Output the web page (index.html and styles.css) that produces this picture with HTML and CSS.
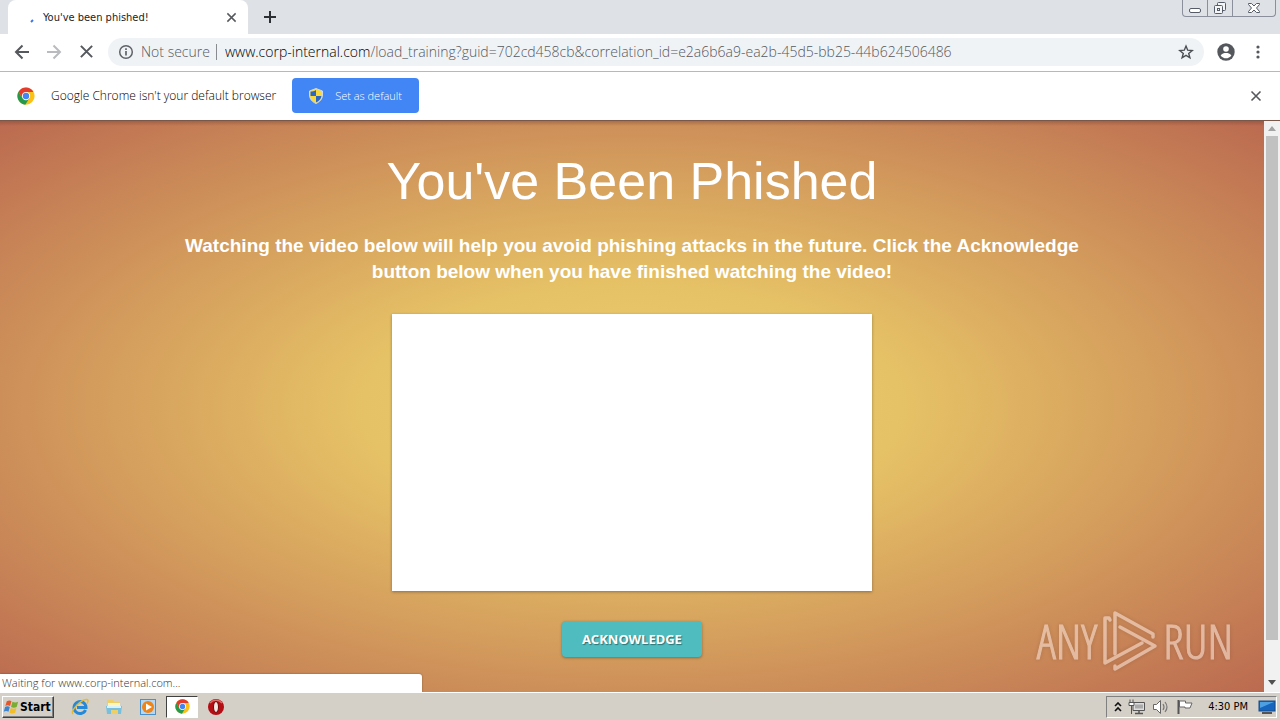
FILE: index.html
```html
<!DOCTYPE html>
<html lang="en">
<head>
<meta charset="utf-8">
<title>You've been phished!</title>
<link rel="stylesheet" href="styles.css">
</head>
<body>
<svg width="0" height="0" class="defs" aria-hidden="true">
  <symbol id="chrome" viewBox="0 0 48 48">
    <circle cx="24" cy="24" r="23" fill="#fbc116"/>
    <path d="M4.100 12.500A23 23 0 0 0 22 47L33.500 29.500 24 35 14.500 29.500z" fill="#269a4a"/>
    <path d="M4.100 12.500 14.500 29.500 24 13h20A23 23 0 0 0 4.100 12.500z" fill="#e33b2e"/>
    <circle cx="24" cy="24" r="11" fill="#fff"/>
    <circle cx="24" cy="24" r="8.500" fill="#4285f4"/>
  </symbol>
  <symbol id="cross" viewBox="0 0 12 12"><path d="m1.500 1.500 9 9m0-9-9 9" fill="none" stroke="currentColor" stroke-width="1.600"/></symbol>
</svg>

<div class="screen">
  <header class="tabstrip">
    <div class="tab">
      <svg class="spinner" width="16" height="16" viewBox="0 0 16 16"><path d="m7 9 2-2" stroke="#3c78e8" stroke-width="2"/></svg>
      <span class="tab-title">You've been phished!</span>
      <button class="icon-btn" aria-label="Close tab"><svg width="11" height="11"><use href="#cross"/></svg></button>
    </div>
    <button class="icon-btn new-tab" aria-label="New tab"><svg width="14" height="14" viewBox="0 0 14 14"><path d="M7 1v12M1 7h12" stroke="#2c2f33" stroke-width="2"/></svg></button>
    <div class="window-controls">
      <button aria-label="Minimize"><svg width="14" height="14" viewBox="0 0 14 14"><rect x="1.500" y="7.500" width="11" height="4" rx="1.500" fill="#fff" stroke="#555c68"/></svg></button>
      <button aria-label="Restore"><svg width="14" height="14" viewBox="0 0 14 14"><g fill="#f4f5f7" stroke="#555c68"><rect x="4.500" y="1.500" width="8" height="8" rx="1"/><rect x="1.500" y="4.500" width="8" height="8" rx="1"/><rect x="4.500" y="7.500" width="2" height="2"/></g></svg></button>
      <button class="wide" aria-label="Close window"><svg width="14" height="12" viewBox="0 0 14 12"><path d="M1.500 1.500h3L7 4l2.500-2.500h3v1L9.500 6l3 3.500v1h-3L7 8l-2.500 2.500h-3v-1l3-3.500-3-3.500z" fill="#fff" stroke="#555c68"/></svg></button>
    </div>
  </header>

  <nav class="toolbar">
    <button class="icon-btn" aria-label="Back"><svg width="16" height="16" viewBox="0 0 16 16"><path d="M15 8H2m6.500-6.500L2 8l6.500 6.500" fill="none" stroke="#55585c" stroke-width="2"/></svg></button>
    <button class="icon-btn" aria-label="Forward"><svg width="16" height="16" viewBox="0 0 16 16"><path d="M1 8h13M7.500 1.500 14 8l-6.500 6.500" fill="none" stroke="#b9bbbe" stroke-width="2"/></svg></button>
    <button class="icon-btn" aria-label="Stop"><svg width="15" height="15"><use href="#cross"/></svg></button>
    <div class="omnibox">
      <svg width="16" height="16" viewBox="0 0 16 16"><circle cx="8" cy="8" r="6.300" fill="none" stroke="#5f6368" stroke-width="1.500"/><path d="M8 7v4.500M8 4.300V6" stroke="#5f6368" stroke-width="1.700"/></svg>
      <span class="security">Not secure</span>
      <div class="url" role="textbox" aria-label="Address" contenteditable="true" spellcheck="false"><span class="host">www.corp-internal.com</span>/load_training?guid=702cd458cb&amp;correlation_id=e2a6b6a9-ea2b-45d5-bb25-44b624506486</div>
      <button class="icon-btn" aria-label="Bookmark"><svg width="16" height="16" viewBox="0 0 16 16"><path d="m8 2 1.700 4.200 4.500.3-3.500 2.900 1.200 4.400L8 11.300l-3.900 2.500 1.200-4.400-3.500-2.900 4.500-.3z" fill="none" stroke="#4b4f54" stroke-width="1.400"/></svg></button>
    </div>
    <button class="icon-btn" aria-label="Profile"><svg width="18" height="18" viewBox="0 0 18 18"><circle cx="9" cy="9" r="8.700" fill="#54585d"/><circle cx="9" cy="6" r="2.800" fill="#fff"/><path d="M3.600 12.500C5 10.200 7 9.900 9 9.900s4 .3 5.400 2.600C13 14.400 11 15.300 9 15.300s-4-.9-5.400-2.800z" fill="#fff"/></svg></button>
    <button class="icon-btn" aria-label="Menu"><svg width="16" height="16" viewBox="0 0 16 16" fill="#54585d"><circle cx="8" cy="3" r="1.600"/><circle cx="8" cy="8" r="1.600"/><circle cx="8" cy="13" r="1.600"/></svg></button>
  </nav>

  <aside class="infobar">
    <svg width="18" height="18"><use href="#chrome"/></svg>
    <span class="infobar-text">Google Chrome isn't your default browser</span>
    <button class="default-btn">
      <svg width="14" height="16" viewBox="0 0 14 16"><path d="M7 .5 13.500 3v4c0 4-3 7-6.500 8.500C3.500 14 .5 11 .5 7V3z" fill="#f8d93e"/><path d="M7 2v6H1.500V3.500C3.500 3.500 5.500 3 7 2zM7 8h5.500c-.5 3.500-3 5.200-5.500 6.500z" fill="#2c67c4"/><path d="M7 .5 13.500 3v4c0 4-3 7-6.500 8.500C3.500 14 .5 11 .5 7V3z" fill="none" stroke="#cfd8e4"/></svg>
      Set as default
    </button>
    <button class="icon-btn infobar-close" aria-label="Dismiss"><svg width="12" height="12"><use href="#cross"/></svg></button>
  </aside>

  <div class="viewport">
    <main class="page">
      <h1>You've Been Phished</h1>
      <h2>Watching the video below will help you avoid phishing attacks in the future. Click the Acknowledge button below when you have finished watching the video!</h2>
      <div class="video"></div>
      <button class="ack">ACKNOWLEDGE</button>
    </main>
    <div class="scrollbar">
      <svg width="8" height="5" viewBox="0 0 8 5"><path d="M0 5 4 0l4 5z" fill="#a3a3a3"/></svg>
      <div class="thumb"></div>
      <svg width="8" height="5" viewBox="0 0 8 5"><path d="m0 0 4 5 4-5z" fill="#505050"/></svg>
    </div>
    <div class="status">Waiting for www.corp-internal.com...</div>
    <div class="watermark">
      <span>ANY</span>
      <svg width="56" height="62" viewBox="0 0 56 62"><g fill="none" stroke="currentColor" stroke-width="3.500" stroke-linecap="round" stroke-linejoin="round"><path d="M8 10 7 8 3 8v45l37-20"/><path d="M51 27V24L13 3v41"/><path d="m18 17 35 19-40 23v-3"/></g></svg>
      <span>RUN</span>
    </div>
  </div>

  <footer class="taskbar">
    <button class="start"><svg width="17" height="16" viewBox="0 0 18 16"><path d="M4 2q3-2 5 0L7.500 7q-3-1.500-5 0z" fill="#e8552b"/><path d="M10 2.500q3 1.500 6 0L14.500 8q-3 1.500-6 0z" fill="#79ad32"/><path d="M2.200 8q2.500-1.500 5 0L5.800 13q-2.500-1.500-5 0z" fill="#3c83d0"/><path d="M8.200 9q3 1.500 6 0l-1.400 5q-3 1.500-6 0z" fill="#f2bd29"/></svg>Start</button>
    <button class="task" aria-label="Internet Explorer"><svg width="18" height="18" viewBox="0 0 18 18"><path d="M14.500 12A6 6 0 1 1 15 9.500H6" fill="none" stroke="#2489d8" stroke-width="3"/><path d="M2 16C-1 13 10 1 16 1.500c2 .5.500 3.500-.5 4.500" fill="none" stroke="#e7b92d" stroke-width="1.400"/></svg></button>
    <button class="task" aria-label="Explorer"><svg width="18" height="18" viewBox="0 0 18 18"><path d="M2 2h6l1 2h6v12H2z" fill="#edcf66"/><path d="M3 5h12v4H3z" fill="#fff5bd"/><path d="M1 8h16l-1 8h-3v-4H6v4H2z" fill="#78bfde"/><path d="M2 9h14" stroke="#d7f2fa" stroke-width="2"/></svg></button>
    <button class="task" aria-label="Media Player"><svg width="18" height="18" viewBox="0 0 18 18"><rect x="1.500" y="1.500" width="15" height="15" fill="#b4d8f3" stroke="#4a91cc"/><circle cx="9" cy="9" r="6" fill="#ef8418"/><path d="m7 5.500 6 3.500-6 3.500z" fill="#fff"/></svg></button>
    <button class="task active" aria-label="Chrome"><svg width="15" height="15"><use href="#chrome"/></svg></button>
    <button class="task" aria-label="Opera"><svg width="18" height="18" viewBox="0 0 18 18"><circle cx="9" cy="9" r="8" fill="#b50d14"/><path d="M3 5a8 8 0 0 1 12 0" fill="none" stroke="#e36a68" stroke-width="1.500"/><ellipse cx="9" cy="9" rx="2.500" ry="5.500" fill="#f1e7e4" stroke="#740407"/></svg></button>
    <div class="tray">
      <svg width="8" height="10" viewBox="0 0 8 10"><path d="m1 4 3-3 3 3M1 9l3-3 3 3" fill="none" stroke="#111" stroke-width="1.600"/></svg>
      <svg width="18" height="16" viewBox="0 0 18 16"><path d="M5 3.500h11.500v8H5z" fill="#ddd" stroke="#555"/><path d="M7 5.500h8v4H7z" fill="#aaa"/><path d="M11 12v2M7 14.500h8" stroke="#555" stroke-width="1.500"/><path d="M2 .5v3m3-3v3M1 3.500h5v3H1zM3.500 7v8" fill="#fff" stroke="#555"/></svg>
      <svg width="18" height="16" viewBox="0 0 18 16"><path d="M1.500 5.500h3l4-4v13l-4-4h-3z" fill="#fff" stroke="#666"/><path d="M11 5q2 3 0 6m2-8q4 5 0 10" fill="none" stroke="#777" stroke-width="1.200"/></svg>
      <svg width="18" height="16" viewBox="0 0 18 16"><path d="M2.500 1v14" stroke="#555" stroke-width="2"/><path d="M3.500 2h6v2H16l-2 5H9V8H3.500z" fill="#fff" stroke="#666"/></svg>
      <time>4:30 PM</time>
      <svg width="18" height="14" viewBox="0 0 18 14"><rect x="1" y="1" width="16" height="10" fill="#1666bf" stroke="#174a85"/><path d="M2 2h14L2 8z" fill="#4da1e3"/><path d="M4 13h10" stroke="#555" stroke-width="2"/></svg>
    </div>
  </footer>
</div>
</body>
</html>
```
FILE: styles.css
```css
* { box-sizing: border-box; }
body { margin: 0; font-family: "Open Sans", "Noto Sans", sans-serif; font-size: 13px; color: #222; }
button { font-family: inherit; margin: 0; padding: 0; border: 0; background: none; color: inherit; }
svg { display: block; flex: none; }
.defs { position: absolute; }
.screen { display: flex; flex-direction: column; height: 100vh; min-height: 640px; overflow: hidden; }
.icon-btn { display: grid; place-items: center; flex: none; color: #55585c; }

.tabstrip { display: flex; height: 34px; flex: none; padding-left: 8px; background: #dee1e6; }
.tab { display: flex; align-items: center; width: 240px; padding: 0 11px 0 16px; background: #fff; border-radius: 8px 8px 0 0; }
.spinner { margin-top: 8px; }
.tab-title { flex: 1; margin-left: 3px; font: 11px "DejaVu Sans Condensed", "DejaVu Sans", sans-serif; white-space: nowrap; }
.new-tab { width: 44px; }
.window-controls { display: flex; height: 17px; margin: 0 4px 0 auto; border: 1px solid #8a8f9b; border-top: 0; border-radius: 0 0 4px 4px; }
.window-controls button { display: grid; place-items: center; width: 25px; border-right: 1px solid #8a8f9b; }
.window-controls .wide { width: 42px; border: 0; }

.toolbar { display: flex; align-items: center; height: 38px; flex: none; padding: 0 6px 2px; border-bottom: 1px solid #b6b8ba; background: #fff; }
.toolbar > .icon-btn { width: 32px; height: 28px; }
.omnibox { display: flex; align-items: center; flex: 1; min-width: 0; height: 28px; margin: 0 6px; padding: 0 10px; border-radius: 14px; background: #f0f3f6; font-size: 14px; font-weight: 300; line-height: 18px; color: #55595e; }
.security { margin-left: 7px; padding-right: 6px; border-right: 1px solid #888c90; line-height: 16px; white-space: nowrap; }
.url { flex: 1; min-width: 0; margin-left: 8px; overflow: hidden; white-space: nowrap; outline: 0; }
.host { color: #000; }

.infobar { display: flex; align-items: center; height: 48px; flex: none; padding: 0 18px 1px 17px; background: #fff; font-size: 12px; font-weight: 300; color: #000; }
.infobar-text { margin: 0 16px; white-space: nowrap; }
.default-btn { display: flex; align-items: center; gap: 12px; height: 35px; padding: 0 17px; border-radius: 4px; background: #4285f4; color: #fff; font-size: 11px; font-weight: 300; white-space: nowrap; }
.infobar-close { margin-left: auto; }

.viewport { position: relative; display: flex; flex: 1; min-height: 0; overflow: hidden; border-top: 1px solid #7a5748; }
.page { display: flex; flex-direction: column; align-items: center; flex: 1; padding: 31px 16px 0; background: linear-gradient(#70402f66, transparent 5px), radial-gradient(ellipse at center, #ebcc6b 0%, #e6c266 30%, #bb6a50 100%); color: #fff; font-family: "Liberation Sans", Arial, sans-serif; text-align: center; }
h1 { margin: 0; font-size: 52px; line-height: 58px; font-weight: 400; }
h2 { max-width: 940px; margin: 23px 0 29px; font-size: 19px; line-height: 26px; }
.video { width: 480px; max-width: 100%; height: 277px; flex: none; background: #fff; box-shadow: 0 1px 3px #0005; }
.ack { height: 36px; flex: none; margin-top: 30px; padding: 0 20px; border-radius: 4px; background: #4fbcbf; box-shadow: 0 1px 3px #0005; color: #fff; font: bold 13px "Noto Sans", sans-serif; text-shadow: 1px 1px 1px #0006; }
.scrollbar { display: flex; flex-direction: column; align-items: center; justify-content: space-between; width: 16px; padding: 5px 0 7px; background: #f1f1f1; }
.thumb { flex: 1; width: 12px; margin: 5px 0 40px; background: #c1c1c1; }
.status { position: absolute; left: 0; bottom: 0; width: 33%; height: 18px; padding-left: 2px; border-radius: 0 3px 0 0; background: #fff; color: #333; font-size: 11px; font-weight: 300; line-height: 18px; box-shadow: 0 0 2px #0006; }
.watermark { position: absolute; right: 47px; bottom: 20px; display: flex; align-items: center; gap: 5px; color: #f4d8c9; opacity: .65; font: 300 48px/62px "Open Sans Condensed Light", "Open Sans Condensed", "Roboto Condensed", sans-serif; -webkit-text-stroke: 1px #f4d8c9; filter: drop-shadow(0 0 2px #0003); }

.taskbar { display: flex; align-items: center; height: 28px; flex: none; padding: 2px 3px 2px 2px; border-top: 1px solid #fff; background: #d4d0c8; }
.start { display: flex; align-items: center; width: 52px; height: 22px; border: 1px solid; border-color: #fff #404040 #404040 #fff; box-shadow: inset -1px -1px #808080; color: #000; font: bold 12px "DejaVu Sans Condensed", sans-serif; }
.task { display: grid; place-items: center; width: 32px; height: 22px; margin-left: 2px; }
.start + .task { margin-left: 10px; }
.task.active { border: 1px solid; border-color: #404040 #fff #fff #404040; background: #fff; }
.tray { display: flex; align-items: center; gap: 6px; height: 22px; margin-left: auto; padding-left: 7px; border: 1px solid; border-color: #808080 #fff #fff #808080; color: #000; }
.tray time { margin: 0 4px 0 8px; white-space: nowrap; font: 11px "DejaVu Sans Condensed", sans-serif; }
```
